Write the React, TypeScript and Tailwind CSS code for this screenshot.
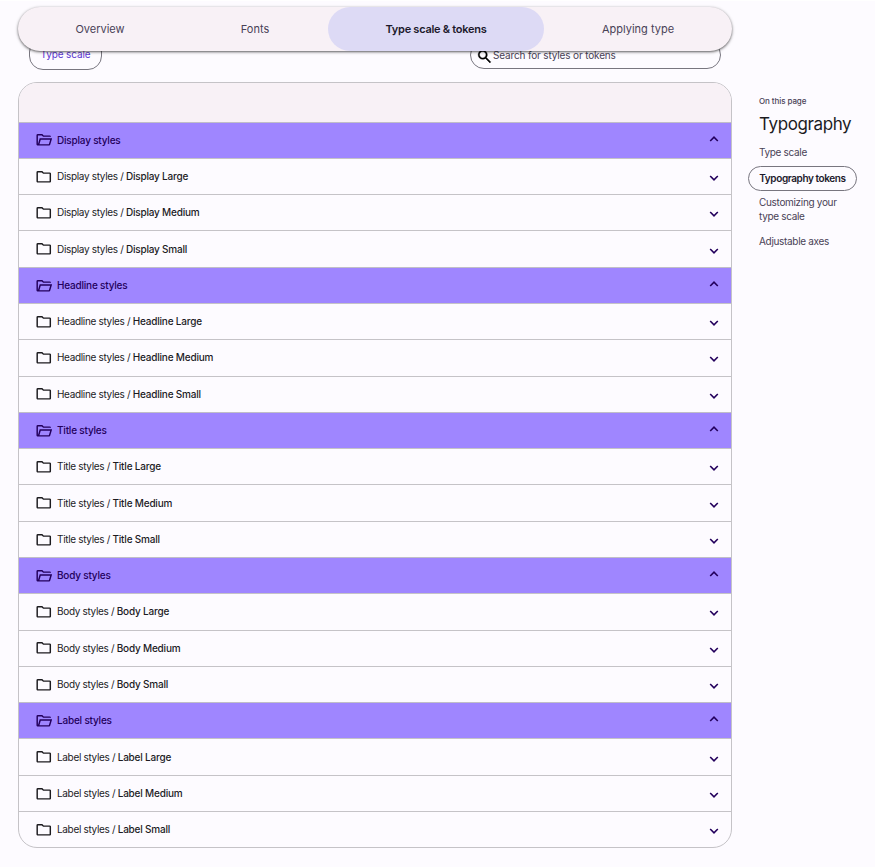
const FONT = "font-['Inter','Liberation_Sans',sans-serif]";

const groups = ['Display', 'Headline', 'Title', 'Body', 'Label'];
const sizes = ['Large', 'Medium', 'Small'];

function Folder({ open = false }: { open?: boolean }) {
  return (
    <svg width="17.5" height="17.5" viewBox="0 0 24 24" fill="currentColor" className="-ml-[1.5px] shrink-0">
      {open ? (
        <path d="M4 20q-.82 0-1.41-.59T2 18V6q0-.82.59-1.41T4 4h6l2 2h8q.82 0 1.41.59T22 8H11.17l-2-2H4v12l2.4-8h17.1l-2.57 8.58q-.2.64-.74 1.03T19 20H4Zm2.1-2H19l1.8-6H7.9l-1.8 6Z" />
      ) : (
        <path d="M4 20q-.82 0-1.41-.59T2 18V6q0-.82.59-1.41T4 4h6l2 2h8q.82 0 1.41.59T22 8v10q0 .82-.59 1.41T20 20H4Zm0-2h16V8h-8.83l-2-2H4v12Z" />
      )}
    </svg>
  );
}

function Chevron({ up = false }: { up?: boolean }) {
  return (
    <svg width="10" height="6" viewBox="0 0 10 6" fill="none" stroke="#23005c" strokeWidth="1.6" className={up ? 'mb-[3px] ml-auto shrink-0' : 'mt-[3px] ml-auto shrink-0'}>
      <path d={up ? 'M1.2 5 5 1.2 8.8 5' : 'M1.2 1 5 4.8 8.8 1'} />
    </svg>
  );
}

export default function App() {
  return (
    <div className={`relative flex h-[867px] w-[875px] overflow-hidden border-t border-white bg-[#fdfbff] ${FONT}`}>
      <nav className="absolute top-[6px] left-[18px] z-10 grid h-[44px] w-[714px] grid-cols-[164px_146px_216px_188px] rounded-full bg-[#f8f1f6] text-[11px] text-[#494256] shadow-[0_1px_2px_rgba(0,0,0,0.45),0_1px_3px_1px_rgba(0,0,0,0.18)]">
        <a className="flex items-center justify-center">Overview</a>
        <a className="flex items-center justify-center">Fonts</a>
        <a className="flex items-center justify-center rounded-full bg-[#dddaf5] font-semibold tracking-[-0.27px] text-[#1c192b]">Type scale &amp; tokens</a>
        <a className="flex items-center justify-center">Applying type</a>
      </nav>

      <main className="ml-[18px] w-[714px] pt-[37px]">
        <div className="flex h-8 items-end justify-between pr-[11px] pl-[11px]">
          <div className="flex h-8 w-[73px] items-center justify-center rounded-[14px] border border-[#78767f] pt-px text-[10px] tracking-[-0.1px] text-[#5b37d0]">Type scale</div>
          <div className="mb-px flex h-[28px] w-[251px] items-center rounded-[14px] border border-[#78767f] pl-[5px] text-[10px] tracking-[-0.15px] text-[#494256]">
            <svg width="17" height="17" viewBox="0 0 24 24" fill="black" className="mt-[3px]">
              <path d="m19.6 21-6.3-6.3q-.75.6-1.73.95T9.5 16q-2.72 0-4.61-1.89T3 9.5t1.89-4.61T9.5 3t4.61 1.89T16 9.5q0 1.1-.35 2.08T14.7 13.3l6.3 6.3L19.6 21ZM9.5 14q1.88 0 3.19-1.31T14 9.5t-1.31-3.19T9.5 5 6.31 6.31 5 9.5t1.31 3.19T9.5 14Z" stroke="black" strokeWidth=".5" />
            </svg>
            <span>Search for styles or tokens</span>
          </div>
        </div>
        <section className="mt-[12px] h-[766px] overflow-hidden rounded-[19px] border border-[#c5c3c7]">
          <div className="h-[38.6px] bg-[#f8f1f6]" />
          {groups.map((group) => (
            <div key={group}>
              <div className="flex h-[36.285px] items-center border-t border-[#c0bec8] bg-[#9f86ff] pr-[12px] pl-[17px] text-[10px] font-medium tracking-[-0.2px] text-[#23005c]">
                <Folder open />
                <span className="ml-[5px]">{group} styles</span>
                <Chevron up />
              </div>
              {sizes.map((size) => (
                <div key={size} className="flex h-[36.285px] items-center border-t border-[#c5c3c7] pr-[12px] pl-[17px] text-[10px] tracking-[-0.33px] text-[#1c1b1f]">
                  <Folder />
                  <span className="ml-[5px] whitespace-pre">{group} styles / <span className="font-medium tracking-[-0.2px]">{group} {size}</span></span>
                  <Chevron />
                </div>
              ))}
            </div>
          ))}
        </section>
      </main>

      <aside className="ml-[16px] w-[111px] pt-[94px] text-[10px] tracking-[-0.32px] text-[#494256]">
        <p className="ml-[11px] text-[8px] leading-3 font-medium tracking-[-0.08px]">On this page</p>
        <h2 className="mt-[6px] ml-[11px] text-[17px] leading-[22px] tracking-[-0.4px] text-[#1c1b1f]">Typography</h2>
        <p className="mt-[10px] ml-[11px] leading-[14px]">Type scale</p>
        <p className="mt-[7px] flex h-[25px] w-[109px] items-center justify-center rounded-full border border-[#78767f] pb-px font-semibold tracking-[-0.4px] whitespace-nowrap text-[#1c192b]">Typography tokens</p>
        <p className="mt-[4px] ml-[11px] leading-[14px]">Customizing your<br />type scale</p>
        <p className="mt-[11px] ml-[11px] leading-[14px]">Adjustable axes</p>
      </aside>
    </div>
  );
}
